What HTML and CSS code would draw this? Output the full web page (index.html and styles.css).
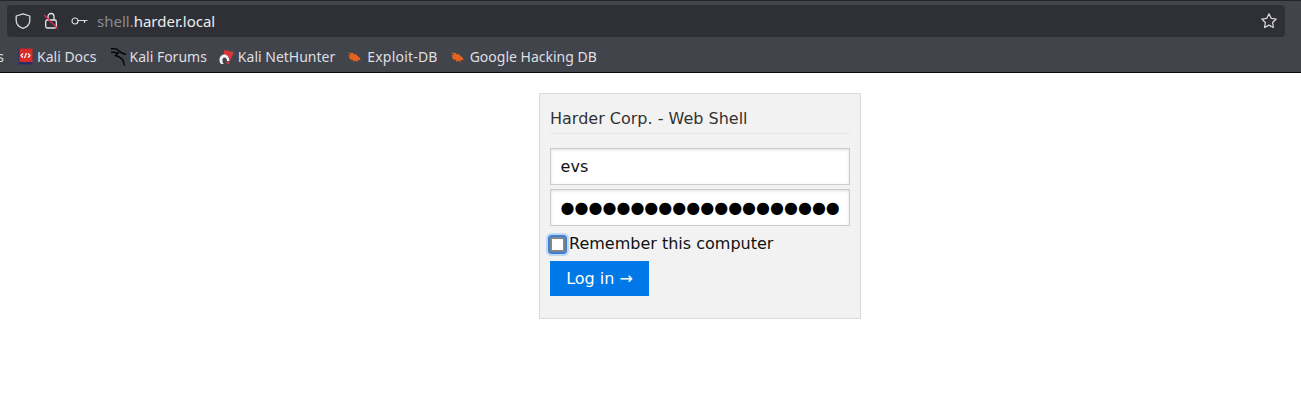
FILE: index.html
```html
<!DOCTYPE html>
<html lang="en">
<head>
<meta charset="utf-8">
<title>Harder Corp. - Web Shell</title>
<link rel="stylesheet" href="styles.css">
</head>
<body>
<header class="chrome">
  <div class="urlbar">
    <svg class="ico shield" width="18" height="18" viewBox="0 0 18 18" fill="none"><path d="M9 1.800 15.800 4v4.600c0 3.800-2.700 6.400-6.800 7.800C4.900 15 2.200 12.400 2.200 8.600V4z" stroke="#dcdcde" stroke-width="1.300" stroke-linejoin="round"/></svg>
    <svg class="ico lock" width="16" height="18" viewBox="0 0 16 18" fill="none"><path d="M5 8V4.500a3 3 0 0 1 6 0V8" stroke="#e6e6e8" stroke-width="1.300"/><rect x="2.700" y="8" width="10.600" height="8" rx="1.500" stroke="#e6e6e8" stroke-width="1.300"/><path d="M1 3 14.500 16.500" stroke="#e0284f" stroke-width="1.300"/></svg>
    <svg class="ico key" width="17" height="10" viewBox="0 0 17 10" fill="none"><circle cx="4" cy="5" r="3" stroke="#dcdcde" stroke-width="1.200"/><path d="M7 4.500H16.500M13.500 4.500V7" stroke="#dcdcde" stroke-width="1.200"/></svg>
    <div class="address"><span class="dim">shell.</span>harder.local</div>
    <svg class="star" width="18" height="18" viewBox="0 0 18 18" fill="none"><path d="M9 1.800 11.200 6.300 16.200 7 12.600 10.500 13.400 15.500 9 13.100 4.600 15.500 5.400 10.500 1.800 7 6.800 6.300z" stroke="#dcdcde" stroke-width="1.200" stroke-linejoin="round"/></svg>
  </div>
  <nav class="bookmarks">
    <span class="bm cut">s</span>
    <span class="bm docs">
      <svg width="15" height="17" viewBox="0 0 15 17"><rect x="0.500" y="0.500" width="14" height="16" fill="#2a2f6b"/><rect x="1.500" y="0.500" width="13" height="13.500" fill="#dc2b27"/><path d="M5 5.500 3 7.500l2 2M10 5.500l2 2-2 2M8.500 5l-2 5" stroke="#fff" stroke-width="1.200" fill="none"/></svg>
      Kali Docs</span>
    <span class="bm forums">
      <svg width="17" height="20" viewBox="0 0 17 20" fill="none"><path d="M1 2C4 .8 7 1.800 9 4c2 2 3.500 2.500 7 3.500M9 5.500 5.500 8.500c2 .5 5 2 6.500 3.500 1.500 1.500 2 3.500 2.500 6.500M1 5.500c3-.5 5 0 7 1" stroke="#050505" stroke-width="1.500"/></svg>
      Kali Forums</span>
    <span class="bm hunter">
      <svg width="16" height="16" viewBox="0 0 16 16"><path d="M6 1 16 3 12.500 11 9.500 7.500 6 7z" fill="#d9363a"/><path d="M1.500 11c0-4 3-6 5.500-5.500 2.500.5 4.500 3 4.500 6.500H9c0-2-1-3.500-2.500-3.500S4 10 4.500 12.500 6 15 7 15H3.500C2 14.500 1.500 13 1.500 11z" fill="#f1f1f3"/><circle cx="10" cy="13.500" r="1.500" fill="#d9363a"/></svg>
      Kali NetHunter</span>
    <span class="bm exploit">
      <svg width="14" height="12" viewBox="0 0 14 12"><path d="M1 1 4 2.200 5.500 1.500 6.500 3 9 3.500 8.500 2 10 4.500 13 7 13.500 9 10.500 9 11 11.500 8.500 9.500 6.500 11 6 9 3.500 8.500 1.500 6 3 5.500 1 4.500 3.500 4z" fill="#e5621f"/></svg>
      Exploit-DB</span>
    <span class="bm ghdb">
      <svg width="14" height="12" viewBox="0 0 14 12"><path d="M1 1 4 2.200 5.500 1.500 6.500 3 9 3.500 8.500 2 10 4.500 13 7 13.500 9 10.500 9 11 11.500 8.500 9.500 6.500 11 6 9 3.500 8.500 1.500 6 3 5.500 1 4.500 3.500 4z" fill="#e5621f"/></svg>
      Google Hacking DB</span>
  </nav>
</header>
<main class="page">
  <form class="card">
    <h1 class="title">Harder Corp. - Web Shell</h1>
    <input class="field first" type="text" value="evs" aria-label="Username">
    <input class="field dots" type="text" value="&#9679;&#9679;&#9679;&#9679;&#9679;&#9679;&#9679;&#9679;&#9679;&#9679;&#9679;&#9679;&#9679;&#9679;&#9679;&#9679;&#9679;&#9679;&#9679;&#9679;" aria-label="Password">
    <label class="remember"><span class="check"></span>Remember this computer</label>
    <button class="login" type="button">Log in →</button>
  </form>
</main>
</body>
</html>
```
FILE: styles.css
```css
* { box-sizing: border-box; }
html, body { margin: 0; padding: 0; background: #fff; }
body { height: 406px; overflow: hidden; font-family: "DejaVu Sans", sans-serif; }

.chrome {
  height: 73px;
  background: #42444c;
  border-top: 1px solid #25262a;
  border-bottom: 1px solid #0c0c0d;
  padding: 4px 16px 0 7px;
  display: flex;
  flex-direction: column;
}
.urlbar {
  height: 32px;
  background: #2f3036;
  border-radius: 4px;
  display: flex;
  align-items: center;
  padding: 0 7px;
  flex: none;
}
.ico { flex: none; }
.shield { margin-right: 11px; }
.lock { margin-right: 12px; }
.key { margin-right: 9px; margin-top: -1px; }
.address {
  font: 15px/20px "Noto Sans", "Open Sans", sans-serif;
  color: #ecedee;
  flex: 1;
}
.dim { color: #8a8b90; }
.star { flex: none; }

.bookmarks {
  flex: 1;
  margin: 0 -16px 0 -7px;
  padding-top: 4px;
  display: flex;
  align-items: center;
  font: 14px/20px "Noto Sans", "Open Sans", sans-serif;
  color: #dfdfe2;
  white-space: nowrap;
}
.bm { display: flex; align-items: center; gap: 4px; }
.cut { width: 18px; justify-content: flex-end; padding-right: 14px; }
.docs { margin-right: 13px; }
.forums { gap: 3px; margin-right: 11px; }
.hunter { margin-right: 12px; }
.exploit { gap: 6px; margin-right: 12px; letter-spacing: 0.200px; }
.ghdb { gap: 6px; }

.page { display: flex; justify-content: center; padding: 20px 0 0 99px; }
.card {
  width: 322px;
  height: 226px;
  background: #f2f2f2;
  border: 1px solid #dcdcdc;
  padding: 10px;
  display: flex;
  flex-direction: column;
  align-items: flex-start;
}
.title {
  margin: 0 0 14px;
  width: 300px;
  height: 30px;
  font-size: 16px;
  font-weight: 400;
  line-height: 30px;
  color: #333;
  border-bottom: 1px solid #e5e5e5;
}
.field {
  width: 300px;
  height: 37px;
  margin: 0 0 4px;
  padding: 0 9.600px;
  background: #fff;
  border: 1px solid #ccc;
  box-shadow: inset 0 1px 3px #ddd;
  border-radius: 0;
  font: 16px "DejaVu Sans", sans-serif;
  color: #111;
  outline: none;
}
.dots { color: #000; margin-bottom: 0; }
.remember {
  display: flex;
  align-items: center;
  height: 20px;
  margin: 8px 0 7px;
  font-size: 16px;
  line-height: 20px;
  color: #111;
}
.check {
  width: 15px;
  height: 15px;
  margin: 0 4px 0 0;
  background: #fff;
  border: 2px solid #85858a;
  border-radius: 2px;
  box-shadow: 0 0 0 2px #3f7fd8, 0 0 0 4px #bcd8f5;
}
.login {
  width: 99px;
  height: 35px;
  padding: 0;
  background: #0078e7;
  border: 0;
  color: #fff;
  font: 16px "DejaVu Sans", sans-serif;
}
```
